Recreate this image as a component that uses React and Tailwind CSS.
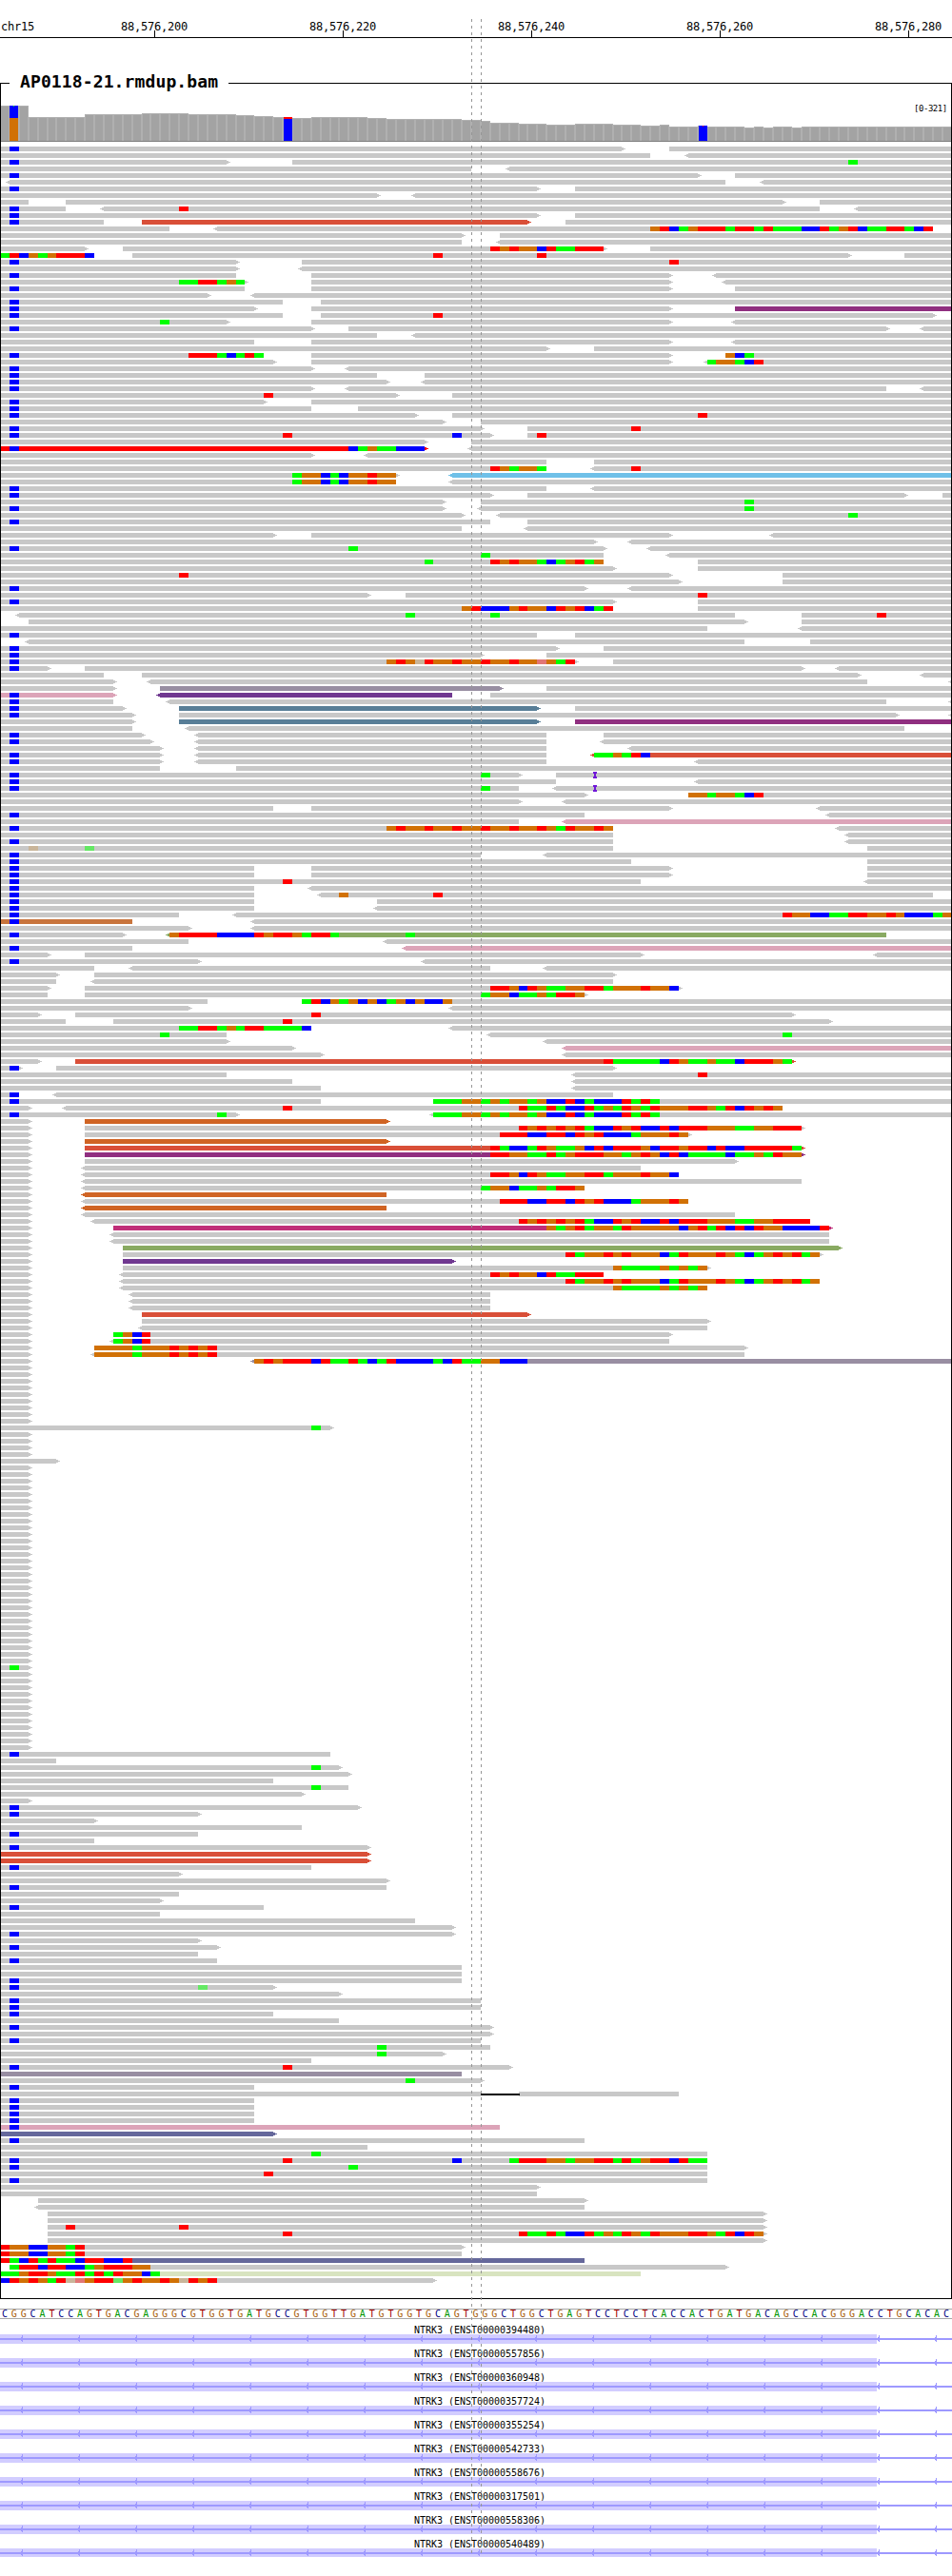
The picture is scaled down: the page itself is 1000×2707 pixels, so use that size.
import React from "react";

const WIDTH = 1000;
const ROW_PITCH = 7;
const MONO = "font-['DejaVu_Sans_Mono','Liberation_Mono',monospace]";

// Left pixel edge of base column i (9.9px per base).
const edge = (i) => Math.round((i * 99) / 10);

const BASES = {
  A: "#00ff00", C: "#0000ff", G: "#d17105", T: "#ff0000",
  a: "#64e864", g: "#c9b59a", t: "#e27676",
};

const COLORS = {
  N: "#c8c8c8", R: "#d94f38", P: "#902f80", B: "#6fc0e8", M: "#988ea2",
  K: "#dca4b8", V: "#703890", E: "#587e97", L: "#89aa62", O: "#d06424",
  W: "#c8743c", F: "#c02e78", S: "#65689b", Y: "#d8e4c0", X: "#ff0000",
};

// One alignment row per line. "start-end" is a read in base columns, with "<" or ">"
// for strand tips and an optional "X:" colour prefix. "@n:SEQ" colours mismatched
// bases, "b" is a C at column 1, "i63" an insertion and "s51-55" a skipped gap.
const ALIGNMENTS = `
b 0-66> 71-101
0-69 <73-101
b 0-24> 31-101 @90:A
0-50 <54-101
b 0-74> 78-101
<1-77 <81-101
b 0-57> 61-101
0-40> <44-101
0-3 7-83> 87-101
b 0-7 <11-87 <91-101 @19:T
b 0-57> 61-101
b 0-11 R:15-56> 60-101
0-18 <23-99 @69:GTCAGTTTATTATAAACCTAGTCAATTACT
0-49> 53-101
0-49 <53-101
0-9> 13-64> 69-101 @52:TGTGGCTAATTT
0-10 14-90> 96-101 @0:ATCGAGTTTC @46:T @57:T
b 0-25> 32-101 @71:T
0-25> <32-101
b 0-25 33-71> <76-101
0-26> 33-71> <77-101 @19:AATTAGA
b 0-26 33-71> 78-101
0-22> <27-101
b 0-30 34-101
b 0-27> 33-71> P:78-101
b 0-30 34-99> @46:T
0-24> 33-71> <78-101 @17:A
b 0-33> 37-94> <98-101
0-40 <44-101
0-27 33-71> <78-101
0-58> 63-101
b 0-28 33-71> 77-101 @20:TTTACATA @77:GCA
0-29> 33-71> <75-101 @75:AGGACT
b 0-33> <37-101
b 0-40 45-101
b 0-41> <45-101
b 0-33> <37-94 <98-101
0-42> 48-101 @28:T
b 0-28> 33-101
b 0-33 38-101
b 0-44> 48-101 @74:T
0-47> 51-101
b 0-51> 56-101 @67:T
b 0-52> 56-101 @30:T @48:C @57:T
0-45> 50-101
X:0-45> b <50-101 @37:CAGAACCC
0-33> <39-101
0-58 63-101
0-58 <63-101 @52:TGAGGA @67:T
0-42> B:<48-101 @31:AGGCACGGTGG
0-42 <48-101 @31:AGGCACGGTGG
b 0-58 <63-101
b 0-52> 56-96> 100-101
0-47> 51-101 @79:A
b 0-47> <51-101 @79:A
0-49> <53-101 @90:A
b 0-52 56-101
0-49 <56-101
0-29> 33-71> <82-101
0-63> <67-101
b 0-64> <69-101 @37:A
0-64 <71-101 @51:A
0-64 74-101 @45:A @52:TGTGGACAGTAG
0-65> 74-101
0-71> 83-101 @19:T
0-72> 83-101
b 0-62> <67-101
0-39> 43-101 @74:T
b 0-65> 74-101
0-65 74-101 @49:GTCCCGTGGCTGTCAT
<2-78 85-101 @43:A @52:A @93:T
3-79> 85-101
0-75 <85-101
b 0-57 61-101
<3-79 86-101
b 0-59> 64-101
b 0-51> 58-101
b 0-61> 65-101 @41:GTGgTGGTGGTGGTGGtGAT
b 0-5> 9-85> <89-101
0-11 15-91> <98-101
0-12> <16-92 <101-101
0-12> M:17-53> 58-101
K:0-12> b V:<17-48 52-101
b 0-12 <18-94 <101-101
b 0-13> E:19-57> 61-101
b 0-14> 19-95> <101-101
0-14> E:19-57> P:61-101
0-14 <20-96
b 0-15> <21-58 64-101
b 0-16> <21-58 <64-101
0-17> <21-58 <67-101
b 0-17> <21-58 R:<63-101 @63:AAGATC
b 0-17> <21-58 <74-101
0-17 25-101
b 0-55> 59-101 @51:A i63
b 0-59 <74-101
b 0-55 <59-101 @51:A i63
0-62> 73-101 @73:GGAGGACT
0-55> <60-101
0-29 33-71> <87-101
b 0-62 <88-101
0-55 K:<60-101
b 0-65 <89-101 @41:GTGGTGGTGGTGGTGGTGATGGTG
0-65 <90-101
b 0-65 <90-101
0-65 92-101 @3:g @9:a
b 0-51 <58-101
b 0-67 92-101
b 0-27 33-71> 92-101
b 0-27 33-71> 92-101
b 0-68 <92-101 @30:T
b 0-27 <33-101
b 0-27 <34-99 @36:G @46:T
b 0-27 40-101
b 0-27 <40-101
b 0-19 <25-101 @83:TGGCCAATTGGTGCCCAG
W:0-14 b <27-101
0-20> <27-101
b 0-13> L:<18-94 @18:GTTTTCCCCTGTTGATTA @43:A
0-20 <41-101
b 0-14 K:<43-101
0-5> 9-68> <93-101
b 0-21> <45-101
0-10 <14-52 <58-101
0-6> 10-65>
0-6 <10-65
0-5> 9-72> @52:TTGCTGAAGGTTAGGGTGGC
0-5 9-62> @51:AGGCAAGATTG
0-22 32-101 @32:ATCGAGCGCAGCGCCG
0-20> <48-101
0-4> 8-84> @33:T
0-7 12-88> @30:T
0-33 <48-101 @19:AATTAGATTAAAAC
0-24 <52-101 @17:A @83:A
0-24> <58-101
0-31> K:<60-101
0-34> <60-101
0-4> R:8-84> @64:TAAAAACTGAAGAACTTTGA
b 0-2> 6-65>
0-24 <61-101 @74:T
0-31 <61-101
0-34 <61-101
b 0-2 <6-65
b 0-34 46-101 @46:AAAGGAGAGGAGCCTCACCCTATA
0-3> <7-83 @30:T @55:TAATACCTAGATGATGGGTTGATCTGTG
b 0-25> <46-101 @23:A @46:AAAGGAGAGGAGCCTCACCCTATA
0-3> O:9-41>
0-3> 9-85> @55:TGTGTGTACCTGTCCTCTTTGGGAAGGTTT
0-3> 9-73> @53:TTTCCTTCTGTCCCAGGGTG
0-3> O:9-41>
0-3> R:9-85> @52:TACCATGAAGCTCTTTGCTTGTTCTCCTTTTTA
0-3> P:9-85> @52:TTGGAATAGTTTGGAGTGCTCAAAACAAGATGG
0-3> 9-78>
0-3> <9-68
0-3> <9-72 @52:TTGCTGAAGGTTAGGGTGGC
0-3> <9-85
0-3> <9-62 @51:AGGCAAGATTG
0-3> O:<9-41
0-3> <9-73 @53:TTTCCTTCTGTCCCAGGGTG
0-3> O:<9-41
0-3> <9-78
0-3> <10-86 @55:TGTGTGTACCTGTCCTCTTTGGGAAGGTTTT
0-3> F:12-88> @58:GAGTAGGATGGGGGCGTATCTCTGGCCCCT
0-3> <12-88
0-3> <12-88
0-3> L:13-89>
0-3> 13-87> @60:TAGGTGTGGGCATGGGTGACAGTGTAG
0-3> V:13-48>
0-3> 13-75> @65:GAAAAGAGAG
0-3> <13-64 @52:TGTGGCTAATTT
0-3> <13-87 @60:TAGGTGTGGGCATGGGTGACAGTGTAG
0-3> <13-75 @65:GAAAAGAGAG
0-3> <14-52
0-3> <14-52
0-3> <14-52
0-3> R:15-56>
0-3> 15-75>
0-3> <15-75
0-3> 12-71> @12:AGCT
0-3> <12-71 @12:AGCT
0-3> 10-79> @10:GGGGAGGGTGTGT
0-3> <10-79 @10:GGGGAGGGTGTGT
0-3> M:<27-101 @27:GTGTTTCTAATACATCCCCACTAAGGCCC
*9
0-35> @33:A
*4
0-6>
*30
0-3> @1:A
*12
b 0-35
0-6
0-36> @33:A
0-37>
0-29
0-37 @33:A
0-32>
0-3>
b 0-38>
b 0-21>
0-10>
0-32
b 0-21
0-10
b 0-39>
R:0-39>
R:0-39>
b 0-33
0-19>
0-41>
b 0-41
0-19
0-17>
b 0-28
0-17
0-44
0-48>
b 0-48>
0-21>
b 0-23>
0-21
b 0-23
0-49
0-49
b 0-49
b 0-29> @21:a
0-36>
b 0-51
b 0-51
b 0-29
0-36
b 0-52>
0-52>
b 0-51
0-52 @40:A
0-47> @40:A
0-33
b 0-54> @30:T
M:0-49
0-51> @43:A
b 0-27
0-51 s51-55 55-72
b 0-27
b 0-27
b 0-27
b 0-27
K:0-53 b
S:0-29>
b 0-62
0-39
0-75 @33:A
b 0-75 @30:T @48:C @54:ATTTGGAGGTTATAGTTCTAA
b 0-75 @37:A
0-75 @28:T
b 0-75
0-57>
0-57
4-62>
<4-62
5-81>
5-81>
5-81> @7:T @19:T
5-81> @30:T @55:TAATACCTAGATGATGGGTTGATCTG
5-81>
0-49> @0:TGGCCGGAT
0-49 @0:TGGCCGGAT
S:0-62 @0:TACTATAACTTCCT
1-77> @1:ATTCTTCCAGTTTGG
Y:0-68 @0:AAGTTGAATATATGGCA
0-46> @0:CTGTGATgtGTTaGTGGTGgTGT
`
  .trim()
  .split("\n")
  // "*n" repeats the short read at the left edge on n rows.
  .flatMap((line) => (line[0] === "*" ? Array(Number(line.slice(1))).fill("0-3>") : [line]));

function parseRow(line) {
  const reads = [];
  const bases = [];
  const marks = [];
  for (const token of line.split(" ")) {
    if (token === "b") bases.push([1, "C"]);
    else if (token[0] === "@") {
      const [at, seq] = token.slice(1).split(":");
      [...seq].forEach((base, k) => bases.push([Number(at) + k, base]));
    } else if (token[0] === "i") marks.push({ kind: "insertion", at: Number(token.slice(1)) });
    else if (token[0] === "s") {
      const [from, to] = token.slice(1).split("-").map(Number);
      marks.push({ kind: "skip", from, to });
    } else {
      const [, color, left, from, to, right] = token.match(/^(?:([A-Z]):)?(<?)(\d+)-(\d+)(>?)$/);
      reads.push({ fill: COLORS[color || "N"], left, right, x1: edge(Number(from)), x2: edge(Number(to)) });
    }
  }
  return { reads, bases, marks };
}

function AlignmentRow({ line, y }) {
  const { reads, bases, marks } = parseRow(line);
  return (
    <g transform={`translate(0 ${y})`}>
      {reads.map((r, k) => (
        <g key={k} fill={r.fill}>
          <rect x={r.x1} y={0} width={r.x2 - r.x1} height={5} />
          {r.right && <path d={`M${r.x2} 1h2v1h2v1h-2v1h-2z`} />}
          {r.left && <path d={`M${r.x1} 1h-2v1h-2v1h2v1h2z`} />}
        </g>
      ))}
      {bases.map(([at, base], k) => (
        <rect key={k} x={edge(at)} y={0} width={edge(at + 1) - edge(at)} height={5} fill={BASES[base]} />
      ))}
      {marks.map((m, k) =>
        m.kind === "insertion" ? (
          <path key={k} d={`M${edge(m.at) - 1} -1h4v2h-1v3h1v2h-4v-2h1v-3h-1z`} fill="#7018d8" />
        ) : (
          <rect key={k} x={edge(m.from)} y={2} width={edge(m.to) - edge(m.from) + 1} height={2} fill="#000" />
        )
      )}
    </g>
  );
}

function Alignments() {
  return (
    <svg className="block" width={998} height={2261} viewBox="1 0 998 2261" shapeRendering="crispEdges">
      {ALIGNMENTS.map((line, i) => (
        <AlignmentRow key={i} line={line} y={i * ROW_PITCH} />
      ))}
    </svg>
  );
}

// [number of bases, y of the column top]
const COVERAGE = [
  [3, 111], [6, 123], [6, 120], [5, 119], [5, 120], [2, 121], [2, 122], [2, 123], [2, 124],
  [6, 123], [2, 124], [8, 125], [2, 126], [1, 127], [3, 129], [3, 130], [3, 131], [4, 130],
  [3, 131], [2, 132], [1, 131], [3, 133], [1, 132], [4, 133], [1, 134], [1, 133], [1, 134],
  [2, 133], [1, 134], [16, 133],
].flatMap(([n, top]) => Array(n).fill(top));

function Coverage() {
  return (
    <svg className="block" width={998} height={66} viewBox="1 88 998 66" shapeRendering="crispEdges">
      {COVERAGE.map((top, i) => (
        <g key={i}>
          <rect x={edge(i)} y={top} width={edge(i + 1) - edge(i)} height={148 - top} fill="#b0b0b0" />
          <rect x={edge(i) + 1} y={top + 1} width={edge(i + 1) - edge(i) - 2} height={147 - top} fill="#a3a3a3" />
        </g>
      ))}
      <rect x={10} y={111} width={9} height={13} fill="#0000ff" />
      <rect x={14} y={111} width={1} height={1} fill="#00ff00" />
      <rect x={10} y={124} width={9} height={24} fill="#d17105" />
      <rect x={298} y={123} width={9} height={2} fill="#ff0000" />
      <rect x={298} y={125} width={9} height={23} fill="#0000ff" />
      <rect x={734} y={132} width={9} height={16} fill="#0000ff" />
      <rect x={738} y={132} width={1} height={1} fill="#ff0000" />
      <rect x={1} y={148} width={998} height={1} fill="#7f7f7f" />
      <text x={960} y={117} fontSize={9} letterSpacing={-0.45} fill="#000">[0-321]</text>
    </svg>
  );
}

const TICKS = [
  [162, "88,576,200"], [360, "88,576,220"], [558, "88,576,240"], [756, "88,576,260"], [954, "88,576,280"],
];

function Ruler() {
  return (
    <svg className="block" width={WIDTH} height={87} fontSize={12} letterSpacing={-0.22}>
      <text x={1} y={32}>chr15</text>
      {TICKS.map(([x, label]) => (
        <g key={x}>
          <text x={x - 35} y={32}>{label}</text>
          <rect x={x} y={32} width={1} height={7} shapeRendering="crispEdges" />
        </g>
      ))}
      <rect x={0} y={39} width={WIDTH} height={1} shapeRendering="crispEdges" />
    </svg>
  );
}

const SEQUENCE =
  "CGGCATCCAGTGACGAGGGCGTGGTGATGCCGTGGTTGATGTGGTGCAGT" +
  "GGGCTGGCTGAGTCCTCCTCACCACTGATGACAGCCACGGGACCTGCACAC";

const LETTER_CLASS = {
  A: "text-[#009600]", C: "text-[#00007f]", G: "text-[#a85d0a]", T: "text-[#a00000]",
};

function Sequence() {
  return (
    <div className="mt-[10px] flex h-[11px] w-[1000px] overflow-hidden border-y border-[#a8a8a8] text-[10px] leading-[9px]">
      {[...SEQUENCE].map((base, i) => (
        <span key={i} className={`w-[9.9px] shrink-0 text-center ${LETTER_CLASS[base]}`}>{base}</span>
      ))}
    </div>
  );
}

const TRANSCRIPTS = [
  "394480", "557856", "360948", "357724", "355254", "542733", "558676", "317501", "558306", "540489",
];

function Transcript({ id }) {
  return (
    <div className="flex flex-col">
      <div className="h-[15px] pl-[435px] text-[10px] leading-[21px] tracking-[-0.02px] whitespace-pre text-black">
        NTRK3 (ENST00000{id})
      </div>
      <svg className="block" width={WIDTH} height={10} shapeRendering="crispEdges">
        <rect x={0} y={0} width={921} height={10} fill="#d2cdff" />
        <rect x={0} y={4} width={WIDTH} height={2} fill="#9e99ff" />
        {Array.from({ length: 17 }, (_, k) => (
          <path key={k} d={`M${21 + k * 60} 4h1v-1h1v-2h1v7h-1v-1h-1v-1h-1z`} fill="#9e99ff" />
        ))}
      </svg>
    </div>
  );
}

// The dashed pair that marks the centre base across every track.
function CenterGuides() {
  return (
    <svg className="pointer-events-none absolute top-0 left-0" width={WIDTH} height={2683} shapeRendering="crispEdges">
      {[495, 505].map((x) => (
        <line key={x} x1={x + 0.5} x2={x + 0.5} y1={20} y2={2683} stroke="#969696" strokeDasharray="3 4" />
      ))}
    </svg>
  );
}

export default function App() {
  return (
    <main className={`relative h-[2707px] w-[1000px] overflow-hidden bg-white text-black ${MONO}`}>
      <Ruler />
      <section className="relative h-[2329px] w-[1000px] border border-black">
        <h1 className="absolute -top-[15px] left-[9px] h-[26px] w-[230px] bg-white pl-[11px] text-[18px] leading-[26px] font-bold tracking-[0.12px]">
          AP0118-21.rmdup.bam
        </h1>
        <Coverage />
        <Alignments />
      </section>
      <Sequence />
      <section className="mt-px flex h-[249px] flex-col overflow-hidden">
        {TRANSCRIPTS.map((id) => (
          <Transcript key={id} id={id} />
        ))}
      </section>
      <CenterGuides />
    </main>
  );
}
